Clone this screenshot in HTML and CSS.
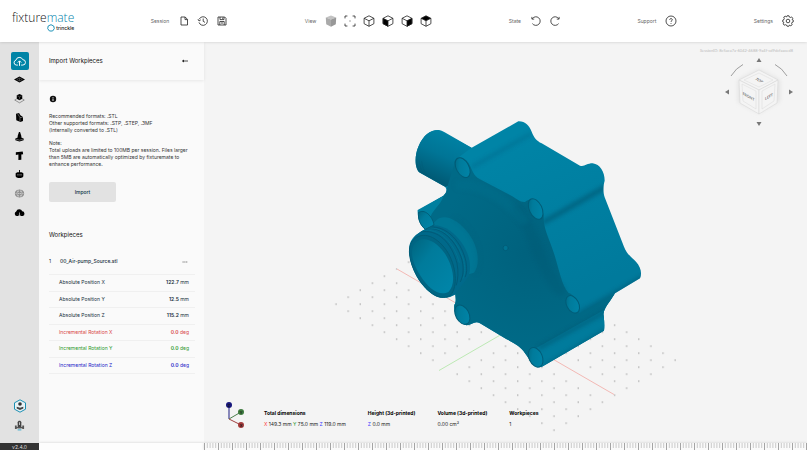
FILE: index.html
```html
<!DOCTYPE html>
<html lang="en">
<head>
<meta charset="utf-8">
<meta name="viewport" content="width=device-width, initial-scale=1">
<title>fixturemate</title>
<link rel="stylesheet" href="styles.css">
</head>
<body>
<div class="app">
  <header class="topbar">
    <a class="brand" href="#">
      <span class="brand-name">fixture<b>mate</b></span>
      <span class="brand-by"><svg class="brand-ring" viewBox="0 0 8 8"><path d="M4 .7 6.700 2 7.300 4.600 5.600 7 2.500 7 .7 4.700 1.200 2Z" fill="none" stroke="#1e93b8"/></svg>trinckle</span>
    </a>
    <div class="group">
      <span>Session</span>
      <button aria-label="New"><svg viewBox="0 0 12 12"><path d="M3 2h4.200L9.500 4.400V10H3ZM7 2v2.600h2.500"/></svg></button>
      <button aria-label="History"><svg viewBox="0 0 12 12"><path d="M2.200 4.200A4.300 4.300 0 1 1 2 7.400M1 4.200 2 6l1.800-1.200M6.200 3.500V6.300L8 7.400"/></svg></button>
      <button aria-label="Save"><svg viewBox="0 0 12 12"><path d="M2 2h6.700L10 3.400V10H2ZM4 2v2.600h4V2M3.800 10V6.500h4.400V10M6.600 2.600v1.200M5 8h2"/></svg></button>
    </div>
    <div class="group">
      <span>View</span>
      <button aria-label="Shaded"><svg class="flat" viewBox="0 0 12 12"><path fill="#c2c2c2" d="M6 .6 11.200 2.600 6 4.400.8 2.600Z"/><path fill="#aaa" d="M.8 2.600 6 4.400V11.700L1.200 9.200Z"/><path fill="#989898" d="M11.200 2.600 6 4.400V11.700L10.800 9.200Z"/></svg></button>
      <button aria-label="Fit"><svg viewBox="0 0 12 12"><path d="M1 3.400V1h2.400M8.600 1H11v2.400M11 8.600V11H8.600M3.400 11H1V8.600M5.500 6h1"/></svg></button>
      <button aria-label="Isometric"><svg viewBox="0 0 12 12"><path d="M6 .8 10.900 3.300V8.700L6 11.300 1.100 8.700V3.300ZM1.100 3.300 6 5.800 10.900 3.300M6 5.800V11.300"/></svg></button>
      <button aria-label="Front"><svg viewBox="0 0 12 12"><path d="M6 .8 10.900 3.300V8.700L6 11.300 1.100 8.700V3.300ZM6 5.800 10.900 3.300"/><path fill="#000" d="M1.100 3.300 6 5.800V11.300L1.100 8.700Z"/></svg></button>
      <button aria-label="Right"><svg viewBox="0 0 12 12"><path d="M6 .8 10.900 3.300V8.700L6 11.300 1.100 8.700V3.300ZM6 5.800 1.100 3.300"/><path fill="#000" d="M10.900 3.300 6 5.800V11.300L10.900 8.700Z"/></svg></button>
      <button aria-label="Top"><svg viewBox="0 0 12 12"><path d="M1.100 3.300V8.700L6 11.300 10.900 8.700V3.300M6 5.800V11.300"/><path fill="#000" d="M6 .8 10.900 3.300 6 5.800 1.100 3.300Z"/></svg></button>
    </div>
    <div class="group">
      <span>State</span>
      <button aria-label="Undo"><svg viewBox="0 0 12 12"><path d="M2.300 3.700A4.300 4.300 0 1 1 2.400 8.600M1.900 1.900v2.200h2.300"/></svg></button>
      <button aria-label="Redo"><svg viewBox="0 0 12 12"><path d="M9.700 3.700A4.300 4.300 0 1 0 9.600 8.600M10.100 1.900v2.200H7.800"/></svg></button>
    </div>
    <div class="group">
      <span>Support</span>
      <button aria-label="Help"><svg viewBox="0 0 12 12"><circle cx="6" cy="6" r="5"/><path d="M4.700 4.800C4.700 3.200 7.300 3.200 7.300 4.700 7.300 5.700 6 5.700 6 6.900M6 8v.8"/></svg></button>
    </div>
    <div class="group">
      <span>Settings</span>
      <button aria-label="Open settings"><svg viewBox="0 0 12 12"><circle cx="6" cy="6" r="1.800"/><path d="M5 .8h2l.4 1.300 1 .4L9.600 1.900 10.800 3.300 10.100 4.500 11.200 5v2l-1.300.5-.3.9.6 1.300L8.800 10.800 7.600 10.100 7 11.200H5L4.500 10 3.400 9.700 2.200 10.200 1.200 8.800 1.900 7.500.8 7V5L2 4.500 2.300 3.400 1.700 2.200 3.200 1.200 4.500 1.900Z"/></svg></button>
    </div>
  </header>

  <nav class="rail" aria-label="Steps">
    <button class="step active" aria-label="Import"><svg viewBox="0 0 12 12"><path fill="none" stroke="#fff" stroke-width=".9" d="M4.500 9.300H3A2.300 2.300 0 0 1 2.700 4.800 3.300 3.300 0 0 1 9 4.300 2.500 2.500 0 0 1 9 9.300H7.500M6 10V5.500M4.400 7 6 5.400 7.600 7"/></svg></button>
    <button class="step" aria-label="Plate"><svg viewBox="0 0 12 12"><path d="M0 6 6 2.800 12 6 6 9.200Z"/><path fill="none" stroke="#999" stroke-width=".4" d="M3 6l3-1.600L9 6 6 7.600ZM6 4.400v3.200"/></svg></button>
    <button class="step" aria-label="Position"><svg viewBox="0 0 12 12"><path d="M6 1 9 2.400V6.300L6 8 3 6.300V2.400Z"/><path fill="none" stroke="#555" stroke-width=".6" d="M3 6.400.8 7.700 6 10.700l5.200-3L9 6.400"/><path fill="none" stroke="#aaa" stroke-width=".4" d="M3.500 3 6 4.200 8.500 3M6 4.200V7"/></svg></button>
    <button class="step" aria-label="Support"><svg viewBox="0 0 12 12"><path d="M2.200 2 5.500 1.200 7 3.500 9.800 5.500V9.800L7 11 2.500 9Z"/><path fill="none" stroke="#bbb" stroke-width=".5" d="M4 2l2.500 4L9.500 6M6.500 6v4.500"/></svg></button>
    <button class="step" aria-label="Locator"><svg viewBox="0 0 12 12"><path d="M5.400 1h1.200L8 5.500V7l2.500 1.200V10L6 11.500 1.500 10V8.200L4 7V5.500Z"/><path fill="none" stroke="#bbb" stroke-width=".5" d="M2 8.800 6 10l4-1.200"/></svg></button>
    <button class="step" aria-label="Text"><svg viewBox="0 0 12 12"><path d="M2 2.500 9.500 1.500 10 4.500 8 5V10.500L4.800 11V5L2 5.500Z"/></svg></button>
    <button class="step" aria-label="Label"><svg viewBox="0 0 12 12"><path d="M5.500 1h1v2.500C9 3.500 10.200 4.200 10.200 5v2.500C10.200 9 8 9.700 6 9.700S1.800 9 1.800 7.500V5C1.800 4.200 3 3.500 5.500 3.500Z"/><path stroke="#ccc" stroke-width=".8" stroke-dasharray="1 .4" d="M3.500 6.400h5"/></svg></button>
    <button class="step" aria-label="Lattice"><svg viewBox="0 0 12 12"><g fill="none" stroke="#777" stroke-width=".8"><ellipse cx="6" cy="6" rx="4.500" ry="3.700"/><circle cx="6" cy="6" r="1.800"/><path d="M3 2.500v7M6 1.800v8.400M9 2.500v7M1.500 4.500h9M1.500 7.500h9" stroke-width=".6"/></g></svg></button>
    <button class="step" aria-label="Export"><svg viewBox="0 0 12 12"><path d="M3 9.800A2.500 2.500 0 0 1 2.400 5 3.500 3.500 0 0 1 9 4.700 2.600 2.600 0 0 1 9.500 9.800Z"/><path fill="none" stroke="#e2e2e2" stroke-width=".7" d="M6 6v4M4.600 8.500 6 10l1.400-1.500"/></svg></button>
    <button class="step account" aria-label="Account"><svg viewBox="0 0 14 14"><path fill="#e8f2f5" stroke="#1b8fb2" d="M7 .8 12.500 3.800V10.200L7 13.200 1.500 10.200V3.800Z"/><circle cx="7" cy="5" r="1.800" fill="#333"/><path fill="#444" d="M3.700 7.700 7 8.700l3.300-1V9.600L7 11 3.700 9.600Z"/></svg></button>
    <button class="step" aria-label="Tour"><svg viewBox="0 0 12 12"><path fill="#444" d="M4 2.500C4 .2 8 .2 8 2.500V9H4Z"/><path fill="#ccc" d="M5.500 2.500h1v3h-1Z"/><path fill="#555" d="M1 6h2v3.800H1ZM9 6h2v3.800H9ZM3 7.500h6V9H3Z"/><path stroke="#2aa5cc" d="M4 10.800h4"/></svg></button>
  </nav>

  <aside class="panel">
    <div class="panel-head">
      <h1>Import Workpieces</h1>
      <button aria-label="Collapse"><svg viewBox="0 0 8 6"><path fill="none" stroke="#222" stroke-width=".8" d="M7 3H1.500"/><path fill="#222" d="M1 3 3 1.600v2.800Z"/></svg></button>
    </div>
    <div class="panel-body">
      <svg class="info" viewBox="0 0 8 8"><circle cx="4" cy="4" r="3.200" fill="#111"/><path stroke="#fff" stroke-width=".9" d="M4 2v.8M4 3.500V6"/></svg>
      <p>Recommended formats: .STL<br>Other supported formats: .STP, .STEP, .3MF<br>(Internally converted to .STL)</p>
      <p>Note:<br>Total uploads are limited to 100MB per session. Files larger than 5MB are automatically optimized by fixturemate to enhance performance.</p>
      <button class="import">Import</button>
      <h2>Workpieces</h2>
      <div class="piece">
        <span>1</span><span class="piece-name">00_Air-pump_Source.stl</span>
        <button aria-label="More"><svg viewBox="0 0 8 4"><path stroke="#555" stroke-width=".8" stroke-dasharray="1.200 .6" d="M1.500 2h5"/></svg></button>
      </div>
      <table class="props">
        <tr><th scope="row">Absolute Position X</th><td><b>122.7</b> mm</td></tr>
        <tr><th scope="row">Absolute Position Y</th><td><b>12.5</b> mm</td></tr>
        <tr><th scope="row">Absolute Position Z</th><td><b>115.2</b> mm</td></tr>
        <tr class="red"><th scope="row">Incremental Rotation X</th><td><b>0.0</b> deg</td></tr>
        <tr class="green"><th scope="row">Incremental Rotation Y</th><td><b>0.0</b> deg</td></tr>
        <tr class="blue"><th scope="row">Incremental Rotation Z</th><td><b>0.0</b> deg</td></tr>
      </table>
    </div>
  </aside>

  <main class="viewport">
    <svg class="scene" viewBox="204 42 603 401" role="img" aria-label="Air pump model">
      <defs>
        <pattern id="dots" patternUnits="userSpaceOnUse" x="330" y="300.500" width="24.220" height="14"><path fill="#a2a2a2" d="M5.400 2.900h1.300v1.300h-1.300ZM17.500 9.900h1.300v1.300h-1.300Z"/></pattern>
        <linearGradient id="side" gradientUnits="userSpaceOnUse" x1="400" y1="60" x2="600" y2="520"><stop offset="0" stop-color="#0084a6"/><stop offset="1" stop-color="#007a9c"/></linearGradient>
        <radialGradient id="face" gradientUnits="userSpaceOnUse" cx="400" cy="430" r="290"><stop offset="0" stop-color="#00617d"/><stop offset=".5" stop-color="#006682"/><stop offset="1" stop-color="#006a87"/></radialGradient>
        <linearGradient id="bore" x1="0" y1="0" x2="1" y2="1"><stop offset="0" stop-color="#00657f"/><stop offset=".35" stop-color="#007b9b"/><stop offset="1" stop-color="#0086aa"/></linearGradient>
        <linearGradient id="pipe" gradientUnits="userSpaceOnUse" x1="130" y1="70" x2="75" y2="195"><stop offset="0" stop-color="#0080a2"/><stop offset=".45" stop-color="#007596"/><stop offset="1" stop-color="#005b76"/></linearGradient>
        <filter id="soft" x="-20%" y="-20%" width="140%" height="140%"><feGaussianBlur stdDeviation="7"/></filter>
        <clipPath id="outline"><path id="hull" d="M115 60C122 60 128 64 134 67L215 113 355 34C375 33 388 47 395 65 402 84 410 92 425 100L540 167C552 172 560 160 578 160 600 163 614 185 614 212 610 225 608 245 614 262L672 410C680 432 695 442 708 455 722 470 727 490 720 505L645 550C630 575 612 595 610 612 612 630 616 645 612 662L425 771C400 775 390 750 375 730 365 712 345 700 320 688L240 640C225 630 215 645 200 646 175 640 160 610 163 585 170 575 166 560 166 553 150 565 130 566 110 560 60 535 25 470 28 410 32 385 45 375 75 358 60 345 52 325 53 300L130 257C140 248 143 240 135 230L60 188C45 180 42 140 55 110 70 75 90 60 115 60Z"/></clipPath>
      </defs>
      <path fill="url(#dots)" d="M332 304 457 231 680 360 554 434Z"/>
      <path stroke="#f4f4f4" stroke-width="4" d="M397 269 614 394.500M439 370.500 566 297"/>
      <path stroke="#f3b9b5" d="M397 269 614 394.500"/>
      <path stroke="#bde9b4" d="M439 370.500 566 297"/>
      <g transform="translate(400 110) scale(.33333)" fill="none" stroke-linecap="round">
        <use href="#hull" fill="url(#side)"/>
        <g clip-path="url(#outline)">
          <path fill="url(#pipe)" d="M115 60 215 113 165 150 190 205 135 232 40 190 40 60Z"/>
          <path stroke="#005a74" stroke-width="2" opacity=".5" d="M50 150Q52 180 66 190M57 152Q60 180 74 192M65 154Q67 182 82 195"/>
          <path stroke="#00688a" stroke-width="9" opacity=".6" filter="url(#soft)" d="M218 170 392 72"/>
          <path stroke="#005873" stroke-width="14" opacity=".7" filter="url(#soft)" d="M432 336 615 232"/>
          <path stroke="#005f7c" stroke-width="20" opacity=".7" filter="url(#soft)" d="M545 610 725 508"/>
          <path fill="url(#face)" d="M162 165C160 140 190 132 206 160 218 180 218 196 240 208L330 255C350 266 360 277 375 276 392 258 425 272 431 318 430 350 442 375 455 410 475 462 482 522 505 548 528 556 544 590 537 610L645 550 620 600 612 640 430 740 400 780 370 735 240 650 200 650 160 620 160 530 75 358 55 305 130 257 140 238Z"/>
          <path stroke="#005a74" stroke-width="32" opacity=".35" filter="url(#soft)" d="M355 300C405 370 420 470 480 540"/>
          <path stroke="#007391" stroke-width="30" opacity=".3" filter="url(#soft)" d="M180 225C240 220 320 270 370 330"/>
          <path fill="#007f9f" d="M53 302 130 257C128 275 105 295 95 312L75 360Z"/>
          <path fill="#007b9c" d="M402 718 612 600V662L425 771C436 755 425 730 402 718Z"/>
          <path stroke="#005c76" stroke-width="12" opacity=".7" filter="url(#soft)" d="M420 712 615 605M440 768 615 664"/>
          <path fill="#007694" d="M108 332C130 310 172 325 207 372 238 415 240 465 222 488L180 500 90 350Z"/>
          <path stroke="#006580" stroke-width="7" opacity=".6" filter="url(#soft)" d="M165 325C220 360 250 430 228 488"/>
          <path fill="#00698a" d="M40 385C70 340 110 335 150 362 195 395 222 455 205 500L165 553 140 565Z"/>
          <path stroke="#005873" stroke-width="2.500" d="M75 357C125 345 170 395 186 450 192 475 190 500 181 515M92 351C145 348 186 400 198 455 201 475 201 490 196 500M60 366C115 355 155 400 171 460 176 485 174 510 169 525"/>
          <path stroke="#007896" stroke-width="2" d="M84 355C135 348 178 400 192 455 196 480 195 492 189 505M68 362C120 352 163 400 178 457"/>
        </g>
        <path fill="#006583" stroke="#005b75" stroke-width="3" d="M35 395C60 362 105 372 140 422 170 468 174 530 152 555 125 574 85 555 52 500 27 456 22 416 35 395Z"/>
        <path fill="url(#bore)" d="M42 402C64 376 103 386 134 430 162 472 168 523 146 545 119 560 88 540 60 495 35 455 31 425 42 402Z"/>
        <g fill="url(#bore)" stroke="#005c77" stroke-width="3">
          <ellipse cx="188" cy="173" rx="19" ry="32" transform="rotate(-28 188 173)"/>
          <ellipse cx="407" cy="297" rx="19" ry="33" transform="rotate(-25 407 297)"/>
          <ellipse cx="518" cy="583" rx="18" ry="28" transform="rotate(-28 518 583)"/>
          <ellipse cx="407" cy="742" rx="20" ry="31" transform="rotate(-24 407 742)"/>
          <ellipse cx="187" cy="614" rx="20" ry="31" transform="rotate(-28 187 614)"/>
          <path d="M56 308C72 294 98 318 102 345L76 358C60 345 53 326 56 308Z"/>
          <circle cx="317" cy="414" r="8" fill="#007391"/>
        </g>
      </g>
    </svg>

    <div class="session">SessionID: 8c5aca7a-6042-4688-9a4f-cd9dcfaaced8</div>
    <svg class="navcube" viewBox="0 0 70 72" role="img" aria-label="Navigation cube">
      <defs><filter id="halo" x="-30%" y="-30%" width="160%" height="160%"><feGaussianBlur stdDeviation="2"/></filter></defs>
      <path fill="#e2e2e2" filter="url(#halo)" d="M35 12 56 23V44L35 56 14 45V23Z"/>
      <g fill="#f4f4f4" stroke="#d4d4d4" stroke-width=".5"><path d="M35 13 54 23 35 33 15 23Z"/><path d="M15 23 35 33V57L16 46Z"/><path d="M54 23 35 33V57L53 46Z"/></g>
      <path fill="none" stroke="#dadada" stroke-width=".5" d="M35 16 49 23 35 30 20 23ZM18 27 32 34V52L19 44ZM51 27 38 34V52L50 44Z"/>
      <g fill="#777"><path d="M35 1 37.500 5h-5Z"/><path d="M35 69 37.500 65h-5Z"/><path d="M1 35 5 32.500v5Z"/><path d="M69 35 65 32.500v5Z"/></g>
      <path fill="none" stroke="#888" stroke-width=".8" d="M7 19Q12 11 19 7.500M51 7.500Q58 11 63 19"/>
      <g class="cube-text"><text transform="matrix(.87 .45 -.87 .5 34 24)">TOP</text><text transform="matrix(.87 .48 0 1 24.500 41)">FRONT</text><text transform="matrix(.87 -.48 0 1 45 41)">LEFT</text></g>
    </svg>

    <footer class="stats">
      <svg class="axes" viewBox="0 0 22 30" role="img" aria-label="Axes">
        <path stroke="#1c1c80" d="M4 18V5"/><path stroke="#4d7f4d" d="M4 18 16 11"/><path stroke="#a04040" d="M4 18 16 24"/>
        <circle cx="4" cy="4" r="3" fill="#17177c"/><circle cx="16" cy="11" r="3" fill="#3f7b3f"/><circle cx="16" cy="24" r="3" fill="#a33b3b"/>
        <g class="axis-text"><text x="4" y="5.500">Z</text><text x="16" y="12.500">Y</text><text x="16" y="25.500">X</text></g>
      </svg>
      <dl>
        <div><dt>Total dimensions</dt><dd><i class="x">X</i> 149.3 mm <i class="y">Y</i> 75.0 mm <i class="z">Z</i> 119.0 mm</dd></div>
        <div><dt>Height (3d-printed)</dt><dd><i class="z">Z</i> 0.0 mm</dd></div>
        <div><dt>Volume (3d-printed)</dt><dd>0.00 cm³</dd></div>
        <div><dt>Workpieces</dt><dd>1</dd></div>
      </dl>
    </footer>
  </main>

  <div class="version">v2.4.0</div>
  <div class="strip"></div>
  <svg class="ruler" aria-hidden="true">
    <defs><pattern id="ticks" patternUnits="userSpaceOnUse" width="14" height="8"><path stroke="#c9c9c9" d="M3.300 0V5M6.100 0V5M8.900 0V5M11.700 0V5"/><path stroke="#a4a4a4" d="M.5 0V7"/></pattern></defs>
    <rect width="100%" height="8" fill="url(#ticks)"/>
  </svg>
</div>
</body>
</html>
```
FILE: styles.css
```css
* { box-sizing: border-box; }
body {
  margin: 0;
  font: 5px/7px Inter, "Liberation Sans", sans-serif;
  color: #222;
}
button {
  display: grid;
  place-items: center;
  padding: 0;
  border: 0;
  background: none;
  font: inherit;
  color: inherit;
}
svg { display: block; }
h1, h2 { margin: 0; font-size: 6px; line-height: 8px; font-weight: 400; color: #111; }

.app {
  display: grid;
  grid-template: 42px minmax(0, 1fr) 7px / 39px 165px minmax(0, 1fr);
  height: 100vh;
  overflow: hidden;
  background: #f4f4f4;
}

.topbar {
  grid-column: 1 / -1;
  z-index: 2;
  display: flex;
  align-items: center;
  justify-content: space-between;
  padding: 0 13px 0 12px;
  background: #fff;
  box-shadow: 0 0 3px rgba(0, 0, 0, .18);
}
.brand { display: grid; justify-items: end; color: #111; text-decoration: none; }
.brand-name { font: 300 12px/13px "Open Sans", sans-serif; }
.brand-name b { font-weight: 300; color: #0684ac; }
.brand-by { display: flex; align-items: center; gap: 1px; font-weight: 500; line-height: 8px; }
.brand-ring { width: 8px; height: 8px; }
.group { display: flex; align-items: center; gap: 7px; color: #666; }
.group span { margin-right: 2px; }
.group svg {
  width: 12px;
  height: 12px;
  fill: none;
  stroke: #222;
  stroke-width: .8;
}
.group .flat { stroke: none; }

.rail {
  z-index: 1;
  display: flex;
  flex-direction: column;
  align-items: center;
  padding: 10px 0 8px;
  background: #e2e2e2;
}
.step { width: 18px; height: 19px; }
.step svg { width: 11px; height: 11px; }
.step.active { height: 18px; border-radius: 2px; background: #0084a6; }
.step.active svg { width: 13px; height: 13px; }
.step.account { height: 21px; margin-top: auto; }
.step.account svg { width: 14px; height: 14px; }

.panel { background: #fafafa; }
.panel-head {
  display: flex;
  align-items: center;
  justify-content: space-between;
  height: 38px;
  padding: 0 15px 0 10px;
  box-shadow: 0 1px 3px rgba(0, 0, 0, .08);
}
.panel-head svg { width: 8px; height: 6px; }
.panel-body { padding: 15px 9px 0 10px; }
.info { width: 8px; height: 8px; margin-bottom: 10px; }
.panel p { margin: 0 0 6px; color: #333; }
.import {
  width: 67px;
  height: 20px;
  margin: 14px 0 29px;
  border-radius: 2px;
  background: #e2e2e2;
  color: #0a3344;
  font-weight: 500;
}
.piece { display: flex; align-items: center; height: 17px; margin-top: 14px; padding-right: 6px; color: #17303c; }
.piece-name { margin: 0 auto 0 9px; font-weight: 500; }
.piece svg { width: 8px; height: 4px; }
.props { width: 100%; height: 100px; margin-top: 4px; border-collapse: collapse; color: #17303c; }
.props tr { border-top: 1px solid #f0f0f0; }
.props tr:last-child { border-bottom: 1px solid #f0f0f0; }
.props th { padding: 0 0 0 10px; font-weight: 400; text-align: left; }
.props td { padding: 0 6px 0 0; text-align: right; }
.props b { font-weight: 600; }
.props .red { color: #d84545; }
.props .green { color: #2a982a; }
.props .blue { color: #2424c8; }

.viewport { position: relative; display: flex; flex-direction: column; align-items: flex-end; }
.scene { position: absolute; inset: 0; width: 100%; height: 100%; }
.session { padding: 5px 14px 0 0; font-size: 4px; font-family: Lato, sans-serif; color: #bbb; }
.navcube { width: 70px; height: 72px; margin: 3px 13px 0 0; }
.cube-text { font: 700 4px Lato, sans-serif; fill: #777; text-anchor: middle; }
.stats { z-index: 1; display: flex; align-items: center; gap: 17px; align-self: stretch; margin-top: auto; padding: 0 0 12px 21px; }
.axes { width: 22px; height: 30px; }
.axis-text { font: 700 4px Lato, sans-serif; fill: #111; text-anchor: middle; }
.stats dl { display: flex; gap: 22px; margin: 5px 0 0; color: #222; }
.stats dt { margin-bottom: 4px; font-weight: 700; color: #000; }
.stats dd { margin: 0; }
.stats i { font-style: normal; }
.x { color: #f33; }
.y { color: #2a982a; }
.z { color: #33f; }

.version { z-index: 2; overflow: hidden; padding-top: 1px; background: #333; color: #ddd; line-height: 6px; text-align: center; }
.strip { background: #fdfdfd; box-shadow: 0 0 3px rgba(0, 0, 0, .18); }
.ruler { width: 100%; height: 7px; background: #fafafa; box-shadow: 0 0 3px rgba(0, 0, 0, .15); }
```
